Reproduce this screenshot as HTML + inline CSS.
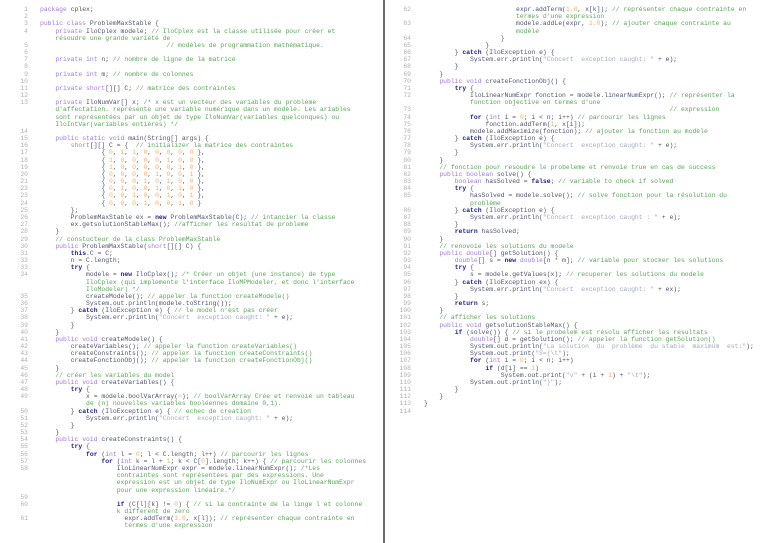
<!DOCTYPE html>
<html><head><meta charset="utf-8"><style>
html,body{margin:0;padding:0;background:#fff;width:768px;height:543px;overflow:hidden;position:relative}
.pg{position:absolute;top:6px;font-family:"Liberation Mono",monospace;font-size:6.4px;color:#50556e}
.r{height:7.18px;line-height:7.18px;white-space:pre;position:relative}
.n{position:absolute;text-align:right;width:20px;color:#b0b0b0}
.k{color:#a07ad6}.b{color:#22228a;font-weight:bold}.c{color:#5aa55a}.m{color:#f2b070}.s{color:#a4aac0}
#L{left:0}#L .n{left:8px}#L .t{position:absolute;left:40px}
#R{left:384px}#R .n{left:6px;width:21px}#R .t{position:absolute;left:40px}
.g{position:absolute;left:383px;top:0;width:2px;height:543px;background:#6e6e6e}
</style></head><body>
<div class="g"></div>
<div class="pg" id="L">
<div class="r"><span class="n">1</span><span class="t"><span class="k">package</span> cplex;</span></div>
<div class="r"><span class="n">2</span></div>
<div class="r"><span class="n">3</span><span class="t"><span class="k">public class</span> ProblemMaxStable {</span></div>
<div class="r"><span class="n">4</span><span class="t">    <span class="k">private</span> IloCplex modele; <span class="c">// IloCplex est la classe utilisée pour créer et</span></span></div>
<div class="r"><span class="t"><span class="c">    résoudre une grande variété de</span></span></div>
<div class="r"><span class="n">5</span><span class="t"><span class="c">                                 // modèles de programmation mathématique.</span></span></div>
<div class="r"><span class="n">6</span></div>
<div class="r"><span class="n">7</span><span class="t">    <span class="k">private int</span> n; <span class="c">// nombre de ligne de la matrice</span></span></div>
<div class="r"><span class="n">8</span></div>
<div class="r"><span class="n">9</span><span class="t">    <span class="k">private int</span> m; <span class="c">// nombre de colonnes</span></span></div>
<div class="r"><span class="n">10</span></div>
<div class="r"><span class="n">11</span><span class="t">    <span class="k">private short</span>[][] C; <span class="c">// matrice des contraintes</span></span></div>
<div class="r"><span class="n">12</span></div>
<div class="r"><span class="n">13</span><span class="t">    <span class="k">private</span> IloNumVar[] x; <span class="c">/* x est un vecteur des variables du problème</span></span></div>
<div class="r"><span class="t"><span class="c">    d'affectation. représente une variable numérique dans un modèle. Les ariables</span></span></div>
<div class="r"><span class="t"><span class="c">    sont représentées par un objet de type IloNumVar(variables quelconques) ou</span></span></div>
<div class="r"><span class="t"><span class="c">    IloIntVar(variables entières) */</span></span></div>
<div class="r"><span class="n">14</span></div>
<div class="r"><span class="n">15</span><span class="t">    <span class="k">public static void</span> main(String[] args) {</span></div>
<div class="r"><span class="n">16</span><span class="t">        <span class="k">short</span>[][] C = {  <span class="c">// initializer la matrice des contraintes</span></span></div>
<div class="r"><span class="n">17</span><span class="t">                { <span class="m">0</span>, <span class="m">1</span>, <span class="m">1</span>, <span class="m">0</span>, <span class="m">0</span>, <span class="m">0</span>, <span class="m">0</span>, <span class="m">0</span> },</span></div>
<div class="r"><span class="n">18</span><span class="t">                { <span class="m">1</span>, <span class="m">0</span>, <span class="m">0</span>, <span class="m">0</span>, <span class="m">0</span>, <span class="m">1</span>, <span class="m">0</span>, <span class="m">0</span> },</span></div>
<div class="r"><span class="n">19</span><span class="t">                { <span class="m">1</span>, <span class="m">0</span>, <span class="m">0</span>, <span class="m">0</span>, <span class="m">0</span>, <span class="m">0</span>, <span class="m">1</span>, <span class="m">0</span> },</span></div>
<div class="r"><span class="n">20</span><span class="t">                { <span class="m">0</span>, <span class="m">0</span>, <span class="m">0</span>, <span class="m">0</span>, <span class="m">1</span>, <span class="m">0</span>, <span class="m">0</span>, <span class="m">1</span> },</span></div>
<div class="r"><span class="n">21</span><span class="t">                { <span class="m">0</span>, <span class="m">0</span>, <span class="m">0</span>, <span class="m">1</span>, <span class="m">0</span>, <span class="m">1</span>, <span class="m">0</span>, <span class="m">0</span> },</span></div>
<div class="r"><span class="n">22</span><span class="t">                { <span class="m">0</span>, <span class="m">1</span>, <span class="m">0</span>, <span class="m">0</span>, <span class="m">1</span>, <span class="m">0</span>, <span class="m">1</span>, <span class="m">0</span> },</span></div>
<div class="r"><span class="n">23</span><span class="t">                { <span class="m">0</span>, <span class="m">0</span>, <span class="m">1</span>, <span class="m">0</span>, <span class="m">0</span>, <span class="m">1</span>, <span class="m">0</span>, <span class="m">1</span> },</span></div>
<div class="r"><span class="n">24</span><span class="t">                { <span class="m">0</span>, <span class="m">0</span>, <span class="m">0</span>, <span class="m">1</span>, <span class="m">0</span>, <span class="m">0</span>, <span class="m">1</span>, <span class="m">0</span> }</span></div>
<div class="r"><span class="n">25</span><span class="t">        };</span></div>
<div class="r"><span class="n">26</span><span class="t">        ProblemMaxStable ex = <span class="b">new</span> ProblemMaxStable(C); <span class="c">// intancier la classe</span></span></div>
<div class="r"><span class="n">27</span><span class="t">        ex.getsolutionStableMax(); <span class="c">//afficher les resultat de probleme</span></span></div>
<div class="r"><span class="n">28</span><span class="t">    }</span></div>
<div class="r"><span class="n">29</span><span class="t">    <span class="c">// constucteur de la class ProblemMaxStable</span></span></div>
<div class="r"><span class="n">30</span><span class="t">    <span class="k">public</span> ProblemMaxStable(<span class="k">short</span>[][] C) {</span></div>
<div class="r"><span class="n">31</span><span class="t">        <span class="b">this</span>.C = C;</span></div>
<div class="r"><span class="n">32</span><span class="t">        n = C.length;</span></div>
<div class="r"><span class="n">33</span><span class="t">        <span class="b">try</span> {</span></div>
<div class="r"><span class="n">34</span><span class="t">            modele = <span class="b">new</span> IloCplex(); <span class="c">/* Créer un objet (une instance) de type</span></span></div>
<div class="r"><span class="t"><span class="c">            IloCplex (qui implemente l'interface IloMPModeler, et donc l'interface</span></span></div>
<div class="r"><span class="t"><span class="c">            IloModeler) */</span></span></div>
<div class="r"><span class="n">35</span><span class="t">            createModele(); <span class="c">// appeler la function createModele()</span></span></div>
<div class="r"><span class="n">36</span><span class="t">            System.out.println(modele.toString());</span></div>
<div class="r"><span class="n">37</span><span class="t">        } <span class="b">catch</span> (IloException e) { <span class="c">// le model n'est pas créer</span></span></div>
<div class="r"><span class="n">38</span><span class="t">            System.err.println(<span class="s">"Concert  exception caught: "</span> + e);</span></div>
<div class="r"><span class="n">39</span><span class="t">        }</span></div>
<div class="r"><span class="n">40</span><span class="t">    }</span></div>
<div class="r"><span class="n">41</span><span class="t">    <span class="k">public void</span> createModele() {</span></div>
<div class="r"><span class="n">42</span><span class="t">        createVariables(); <span class="c">// appeler la function createVariables()</span></span></div>
<div class="r"><span class="n">43</span><span class="t">        createConstraints(); <span class="c">// appeler la function createConstraints()</span></span></div>
<div class="r"><span class="n">44</span><span class="t">        createFonctionObj(); <span class="c">// appeler la function createFonctionObj()</span></span></div>
<div class="r"><span class="n">45</span><span class="t">    }</span></div>
<div class="r"><span class="n">46</span><span class="t">    <span class="c">// créer les variables du model</span></span></div>
<div class="r"><span class="n">47</span><span class="t">    <span class="k">public void</span> createVariables() {</span></div>
<div class="r"><span class="n">48</span><span class="t">        <span class="b">try</span> {</span></div>
<div class="r"><span class="n">49</span><span class="t">            x = modele.boolVarArray(<span class="m">n</span>); <span class="c">// boolVarArray Crée et renvoie un tableau</span></span></div>
<div class="r"><span class="t"><span class="c">            de (n) nouvelles variables booléennes domaine 0,1).</span></span></div>
<div class="r"><span class="n">50</span><span class="t">        } <span class="b">catch</span> (IloException e) { <span class="c">// echec de creation</span></span></div>
<div class="r"><span class="n">51</span><span class="t">            System.err.println(<span class="s">"Concert  exception caught: "</span> + e);</span></div>
<div class="r"><span class="n">52</span><span class="t">        }</span></div>
<div class="r"><span class="n">53</span><span class="t">    }</span></div>
<div class="r"><span class="n">54</span><span class="t">    <span class="k">public void</span> createConstraints() {</span></div>
<div class="r"><span class="n">55</span><span class="t">        <span class="b">try</span> {</span></div>
<div class="r"><span class="n">56</span><span class="t">            <span class="b">for</span> (<span class="k">int</span> l = <span class="m">0</span>; l &lt; C.length; l++) <span class="c">// parcourir les lignes</span></span></div>
<div class="r"><span class="n">57</span><span class="t">                <span class="b">for</span> (<span class="k">int</span> k = l + <span class="m">1</span>; k &lt; C[<span class="m">0</span>].length; k++) { <span class="c">// parcourir les colonnes</span></span></div>
<div class="r"><span class="n">58</span><span class="t">                    IloLinearNumExpr expr = modele.linearNumExpr(); <span class="c">/*Les</span></span></div>
<div class="r"><span class="t"><span class="c">                    contraintes sont représentées par des expressions. Une</span></span></div>
<div class="r"><span class="t"><span class="c">                    expression est un objet de type IloNumExpr ou IloLinearNumExpr</span></span></div>
<div class="r"><span class="t"><span class="c">                    pour une expression linéaire.*/</span></span></div>
<div class="r"><span class="n">59</span></div>
<div class="r"><span class="n">60</span><span class="t">                    <span class="b">if</span> (C[l][k] != <span class="m">0</span>) { <span class="c">// si la contrainte de la linge l et colonne</span></span></div>
<div class="r"><span class="t"><span class="c">                    k different de zero</span></span></div>
<div class="r"><span class="n">61</span><span class="t">                      expr.addTerm(<span class="m">1.0</span>, x[l]); <span class="c">// représenter chaque contrainte en</span></span></div>
<div class="r"><span class="t"><span class="c">                      termes d'une expression</span></span></div>
</div>
<div class="pg" id="R">
<div class="r"><span class="n">62</span><span class="t">                        expr.addTerm(<span class="m">1.0</span>, x[k]); <span class="c">// représenter chaque contrainte en</span></span></div>
<div class="r"><span class="t"><span class="c">                        termes d'une expression</span></span></div>
<div class="r"><span class="n">63</span><span class="t">                        modele.addLe(expr, <span class="m">1.0</span>); <span class="c">// ajouter chaque contrainte au</span></span></div>
<div class="r"><span class="t"><span class="c">                        modèle</span></span></div>
<div class="r"><span class="n">64</span><span class="t">                    }</span></div>
<div class="r"><span class="n">65</span><span class="t">                }</span></div>
<div class="r"><span class="n">66</span><span class="t">        } <span class="b">catch</span> (IloException e) {</span></div>
<div class="r"><span class="n">67</span><span class="t">            System.err.println(<span class="s">"Concert  exception caught: "</span> + e);</span></div>
<div class="r"><span class="n">68</span><span class="t">        }</span></div>
<div class="r"><span class="n">69</span><span class="t">    }</span></div>
<div class="r"><span class="n">70</span><span class="t">    <span class="k">public void</span> createFonctionObj() {</span></div>
<div class="r"><span class="n">71</span><span class="t">        <span class="b">try</span> {</span></div>
<div class="r"><span class="n">72</span><span class="t">            IloLinearNumExpr fonction = modele.linearNumExpr(); <span class="c">// représenter la</span></span></div>
<div class="r"><span class="t"><span class="c">            fonction objective en termes d'une</span></span></div>
<div class="r"><span class="n">73</span><span class="t"><span class="c">                                                                // expression</span></span></div>
<div class="r"><span class="n">74</span><span class="t">            <span class="b">for</span> (<span class="k">int</span> i = <span class="m">0</span>; i &lt; n; i++) <span class="c">// parcourir les lignes</span></span></div>
<div class="r"><span class="n">75</span><span class="t">                fonction.addTerm(<span class="m">1</span>, x[i]);</span></div>
<div class="r"><span class="n">76</span><span class="t">            modele.addMaximize(fonction); <span class="c">// ajouter la fonction au modèle</span></span></div>
<div class="r"><span class="n">77</span><span class="t">        } <span class="b">catch</span> (IloException e) {</span></div>
<div class="r"><span class="n">78</span><span class="t">            System.err.println(<span class="s">"Concert  exception caught: "</span> + e);</span></div>
<div class="r"><span class="n">79</span><span class="t">        }</span></div>
<div class="r"><span class="n">80</span><span class="t">    }</span></div>
<div class="r"><span class="n">81</span><span class="t">    <span class="c">// fonction pour resoudre le probeleme et renvoie true en cas de success</span></span></div>
<div class="r"><span class="n">82</span><span class="t">    <span class="k">public boolean</span> solve() {</span></div>
<div class="r"><span class="n">83</span><span class="t">        <span class="k">boolean</span> hasSolved = <span class="b">false</span>; <span class="c">// variable to check if solved</span></span></div>
<div class="r"><span class="n">84</span><span class="t">        <span class="b">try</span> {</span></div>
<div class="r"><span class="n">85</span><span class="t">            hasSolved = modele.solve(); <span class="c">// solve fonction pour la résolution du</span></span></div>
<div class="r"><span class="t"><span class="c">            problème</span></span></div>
<div class="r"><span class="n">86</span><span class="t">        } <span class="b">catch</span> (IloException e) {</span></div>
<div class="r"><span class="n">87</span><span class="t">            System.err.println(<span class="s">"Concert  exception caught : "</span> + e);</span></div>
<div class="r"><span class="n">88</span><span class="t">        }</span></div>
<div class="r"><span class="n">89</span><span class="t">        <span class="b">return</span> hasSolved;</span></div>
<div class="r"><span class="n">90</span><span class="t">    }</span></div>
<div class="r"><span class="n">91</span><span class="t">    <span class="c">// renovoie les solutions du modele</span></span></div>
<div class="r"><span class="n">92</span><span class="t">    <span class="k">public double</span>[] getSolution() {</span></div>
<div class="r"><span class="n">93</span><span class="t">        <span class="k">double</span>[] s = <span class="b">new</span> <span class="k">double</span>[n * m]; <span class="c">// variable pour stocker les solutions</span></span></div>
<div class="r"><span class="n">94</span><span class="t">        <span class="b">try</span> {</span></div>
<div class="r"><span class="n">95</span><span class="t">            s = modele.getValues(x); <span class="c">// recuperer les solutions du modele</span></span></div>
<div class="r"><span class="n">96</span><span class="t">        } <span class="b">catch</span> (IloException ex) {</span></div>
<div class="r"><span class="n">97</span><span class="t">            System.err.println(<span class="s">"Concert  exception caught: "</span> + ex);</span></div>
<div class="r"><span class="n">98</span><span class="t">        }</span></div>
<div class="r"><span class="n">99</span><span class="t">        <span class="b">return</span> s;</span></div>
<div class="r"><span class="n">100</span><span class="t">    }</span></div>
<div class="r"><span class="n">101</span><span class="t">    <span class="c">// afficher les solutions</span></span></div>
<div class="r"><span class="n">102</span><span class="t">    <span class="k">public void</span> getsolutionStableMax() {</span></div>
<div class="r"><span class="n">103</span><span class="t">        <span class="b">if</span> (solve()) { <span class="c">// si le probelem est résolu afficher les resultats</span></span></div>
<div class="r"><span class="n">104</span><span class="t">            <span class="k">double</span>[] d = getSolution(); <span class="c">// appeler la function getSolution()</span></span></div>
<div class="r"><span class="n">105</span><span class="t">            System.out.println(<span class="s">"La solution  du  problème  du stable  maximum  est:"</span>);</span></div>
<div class="r"><span class="n">106</span><span class="t">            System.out.print(<span class="s">"S={\t"</span>);</span></div>
<div class="r"><span class="n">107</span><span class="t">            <span class="b">for</span> (<span class="k">int</span> i = <span class="m">0</span>; i &lt; n; i++)</span></div>
<div class="r"><span class="n">108</span><span class="t">                <span class="b">if</span> (d[i] == <span class="m">1</span>)</span></div>
<div class="r"><span class="n">109</span><span class="t">                    System.out.print(<span class="s">"v"</span> + (i + <span class="m">1</span>) + <span class="s">"\t"</span>);</span></div>
<div class="r"><span class="n">110</span><span class="t">            System.out.println(<span class="s">"}"</span>);</span></div>
<div class="r"><span class="n">111</span><span class="t">        }</span></div>
<div class="r"><span class="n">112</span><span class="t">    }</span></div>
<div class="r"><span class="n">113</span><span class="t">}</span></div>
<div class="r"><span class="n">114</span></div>
</div>
</body></html>
